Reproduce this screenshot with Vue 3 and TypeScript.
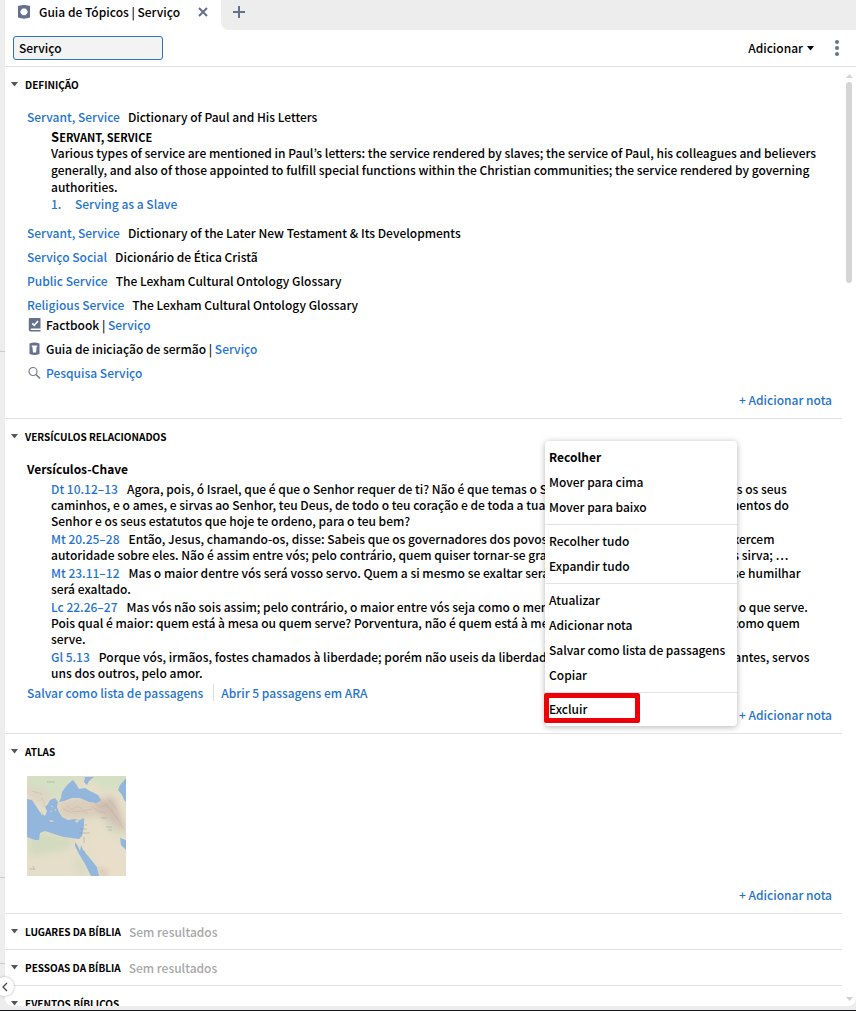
<script setup lang="ts">
import { ref } from 'vue'

interface Entry { term: string; source: string }
interface Verse { reference: string; text: string }
interface MenuItem { label: string; strong?: boolean; marked?: boolean }

const topic = ref('Serviço')

const entries: Entry[] = [
  { term: 'Servant, Service', source: 'Dictionary of the Later New Testament & Its Developments' },
  { term: 'Serviço Social', source: 'Dicionário de Ética Cristã' },
  { term: 'Public Service', source: 'The Lexham Cultural Ontology Glossary' },
  { term: 'Religious Service', source: 'The Lexham Cultural Ontology Glossary' },
]

const verses: Verse[] = [
  { reference: 'Dt 10.12–13', text: 'Agora, pois, ó Israel, que é que o Senhor requer de ti? Não é que temas o Senhor, teu Deus, e andes em todos os seus caminhos, e o ames, e sirvas ao Senhor, teu Deus, de todo o teu coração e de toda a tua alma, para guardares os mandamentos do Senhor e os seus estatutos que hoje te ordeno, para o teu bem?' },
  { reference: 'Mt 20.25–28', text: 'Então, Jesus, chamando-os, disse: Sabeis que os governadores dos povos os dominam e que os maiorais exercem autoridade sobre eles. Não é assim entre vós; pelo contrário, quem quiser tornar-se grande entre vós, será esse o que vos sirva; …' },
  { reference: 'Mt 23.11–12', text: 'Mas o maior dentre vós será vosso servo. Quem a si mesmo se exaltar será humilhado; e quem a si mesmo se humilhar será exaltado.' },
  { reference: 'Lc 22.26–27', text: 'Mas vós não sois assim; pelo contrário, o maior entre vós seja como o menor; e aquele que dirige seja como o que serve. Pois qual é maior: quem está à mesa ou quem serve? Porventura, não é quem está à mesa? Pois, no meio de vós, eu sou como quem serve.' },
  { reference: 'Gl 5.13', text: 'Porque vós, irmãos, fostes chamados à liberdade; porém não useis da liberdade para dar ocasião à carne; sede, antes, servos uns dos outros, pelo amor.' },
]

const menu: MenuItem[][] = [
  [{ label: 'Recolher', strong: true }, { label: 'Mover para cima' }, { label: 'Mover para baixo' }],
  [{ label: 'Recolher tudo' }, { label: 'Expandir tudo' }],
  [{ label: 'Atualizar' }, { label: 'Adicionar nota' }, { label: 'Salvar como lista de passagens' }, { label: 'Copiar' }],
  [{ label: 'Excluir', marked: true }],
]

const emptySections = ['Lugares da Bíblia', 'Pessoas da Bíblia']
</script>

<template>
  <div class="app">
    <aside class="rail">
      <button class="expand" aria-label="Expandir painel">
        <svg width="6" height="10" viewBox="0 0 6 10"><path d="M5 1 1 5l4 4" fill="none" stroke="#444" stroke-width="1.3" /></svg>
      </button>
    </aside>
    <div class="window">
      <nav class="tabs">
        <div class="tab">
          <svg width="14" height="16" viewBox="0 0 14 16"><path d="M1 2Q7-.2 13 2V13.500Q7 15.800 1 13.500Z" fill="#64708c" /><path d="M5.300 5h3.400l1.700 2.800-1.700 2.900H5.300L3.600 7.800Z" fill="#fff" stroke="#fff" stroke-linejoin="round" /></svg>
          <span class="tab-title">Guia de Tópicos | Serviço</span>
          <button class="icon-button" aria-label="Fechar guia">
            <svg width="10" height="10" viewBox="0 0 10 10"><path d="m1 1 8 8M9 1 1 9" stroke="#64708c" stroke-width="2" /></svg>
          </button>
        </div>
        <div class="tab-rest">
          <button class="icon-button" aria-label="Nova guia">
            <svg width="12" height="12" viewBox="0 0 12 12"><path d="M6 0v12M0 6h12" stroke="#64708c" stroke-width="2" /></svg>
          </button>
        </div>
      </nav>

      <header class="toolbar">
        <input v-model="topic" class="topic" type="text" aria-label="Tópico" />
        <div class="tools">
          <button class="add">Adicionar <svg width="7" height="5" viewBox="0 0 7 5"><path d="M0 0h7L3.500 4.500Z" fill="#000" /></svg></button>
          <button class="icon-button" aria-label="Mais opções">
            <svg width="4" height="16" viewBox="0 0 4 16" fill="#6b7385"><circle cx="2" cy="2" r="2" /><circle cx="2" cy="8" r="2" /><circle cx="2" cy="14" r="2" /></svg>
          </button>
        </div>
      </header>

      <div class="viewport">
        <main class="content">
          <section class="section">
            <h2 class="heading"><svg class="caret" viewBox="0 0 7 5"><path d="M0 0h7L3.500 4.500Z" /></svg><span class="title">Definição</span></h2>
            <div class="body definitions">
              <p class="entry"><a href="#">Servant, Service</a><span>Dictionary of Paul and His Letters</span></p>
              <div class="excerpt">
                <h3 class="caps">Servant, service</h3>
                <p>Various types of service are mentioned in Paul’s letters: the service rendered by slaves; the service of Paul, his colleagues and believers generally, and also of those appointed to fulfill special functions within the Christian communities; the service rendered by governing authorities.</p>
                <a class="numbered" href="#"><span>1.</span><span>Serving as a Slave</span></a>
              </div>
              <p v-for="entry in entries" :key="entry.term" class="entry"><a href="#">{{ entry.term }}</a><span>{{ entry.source }}</span></p>
            </div>
            <div class="resources">
              <p class="resource">
                <svg width="13" height="14" viewBox="0 0 13 14"><path d="M2 0h10.500v10.500H3a1 1 0 0 0 0 1.500h9.500v1.500H2.500A2 2 0 0 1 .800 11.800V1.200Q.800 0 2 0Z" fill="#64708c" /><path d="m4.300 5.400 1.900 1.900 3.800-4.100" fill="none" stroke="#fff" stroke-width="1.700" /></svg>
                <span>Factbook | <a href="#">Serviço</a></span>
              </p>
              <p class="resource">
                <svg width="13" height="14" viewBox="0 0 13 14"><path d="M1.500 1.500Q6.500-.5 11.500 1.500V12Q6.500 14 1.500 12Z" fill="#64708c" /><path d="M3.700 3.500h5.600v1.300h-.700l-.500 5.700H4.900l-.500-5.700h-.700Z" fill="#fff" /></svg>
                <span>Guia de iniciação de sermão | <a href="#">Serviço</a></span>
              </p>
              <p class="resource">
                <svg width="13" height="14" viewBox="0 0 13 14" fill="none" stroke="#777d87"><circle cx="5" cy="5.500" r="4" stroke-width="1.200" /><path d="m8 8.500 4 4" stroke-width="1.700" /></svg>
                <a href="#">Pesquisa Serviço</a>
              </p>
            </div>
            <div class="note note-spaced"><a href="#">+ Adicionar nota</a></div>
          </section>

          <section class="section">
            <h2 class="heading"><svg class="caret" viewBox="0 0 7 5"><path d="M0 0h7L3.500 4.500Z" /></svg><span class="title">Versículos relacionados</span></h2>
            <div class="body related">
              <h3 class="key">Versículos-Chave</h3>
              <p v-for="verse in verses" :key="verse.reference" class="verse"><a href="#">{{ verse.reference }}</a>{{ verse.text }}</p>
              <div class="links"><a href="#">Salvar como lista de passagens</a><a href="#">Abrir 5 passagens em ARA</a></div>
            </div>
            <div class="note"><a href="#">+ Adicionar nota</a></div>

            <div class="menu" role="menu">
              <div v-for="(group, index) in menu" :key="index" class="group">
                <button v-for="item in group" :key="item.label" class="item" :class="{ strong: item.strong, marked: item.marked }" role="menuitem">{{ item.label }}</button>
              </div>
            </div>
          </section>

          <section class="section">
            <h2 class="heading"><svg class="caret" viewBox="0 0 7 5"><path d="M0 0h7L3.500 4.500Z" /></svg><span class="title">Atlas</span></h2>
            <div class="body atlas">
              <svg class="map" viewBox="0 0 99 100" role="img" aria-label="Mapa do Mediterrâneo oriental">
                <defs>
                  <filter id="soft" x="-10%" y="-10%" width="120%" height="120%"><feGaussianBlur stdDeviation="3" /></filter>
                  <filter id="shore"><feGaussianBlur stdDeviation=".5" /></filter>
                </defs>
                <rect width="99" height="100" fill="#e5dec9" />
                <g filter="url(#soft)">
                  <path d="M-5-5h110v18L75 14 62 0 42 7 34 22 20 22 0 18Z" fill="#d5dfc4" />
                  <path d="M-4 8l22 5 8 10-10 8-20-14Z" fill="#ddd5c1" />
                  <path d="M0 62l14-6 34 5-6 12-38 8Z" fill="#d3dabf" />
                  <path d="M32 26l20-4 24 3 12-2 6 20 5 14-11-5-14-12-24 3-18-2Z" fill="#dacdbb" />
                  <path d="M66 26l20-6 7 18 8 20-15-12-14-9Z" fill="#d0c0b3" />
                  <path d="M72 38l16 11 6 12-12-8Z" fill="#d3d8bd" />
                  <path d="M47 78l8 6 8 16H50Z" fill="#dadcc3" />
                  <path d="M60 58l25 5 12 14v23H76Z" fill="#e9dec9" />
                </g>
                <path d="M72 91q8 3 10 9H73Z" fill="#d8bfaa" filter="url(#soft)" />
                <g fill="#92b6dc" filter="url(#shore)">
                  <path d="M34 22 35 16l5-7 6-5 3 4 3 5 6-1 5 3 8 4 3 5-4 3-8-1-9-4-8 0-8 3-5 1Z" />
                  <path d="M58 1h9l-5 4-2 4-3-3Z" />
                  <path d="M99 2l-6 7-2 5 4 5 2 5 2 2Z" />
                  <path d="M0 23l5 1 4 6 4 6 5 4 2-5-2-4 3-3 2-4 5-2 3 4-1 5 2 5 3 5 6 3 6-1 6 1 4-2 0 8-2 10-3 3-7-1-8-1-7-2-6-2-6-2-5 2-1 7-4 0-8-3Z" />
                  <path d="M48 66l3 4 2 5 1-6 2 5 5 6 9 11 2 9h-8l-6-12-6-10-4-8Z" />
                  <path d="M93 62l6 2v10l-5-5Z" />
                </g>
                <path d="M22 44l6 1-4 1ZM48 45l5-2-3 4ZM14 33l4 4-4 2Z" fill="#e0d8c4" />
                <path d="m24 30 2 1m-3 4 2 1m3-3 1 2" stroke="#d8d0bb" />
                <g fill="none" stroke="#99988d" stroke-width=".7" opacity=".65">
                  <path d="M20 6h8M53 53h7M52 57h11M58 49h2M74 42h6M79 51h6M81 54h4M2 93h5M6 90l2 4M57 61v6M57 74v3" />
                </g>
                <g fill="none" stroke="#b6a495" stroke-width=".6" opacity=".5">
                  <path d="m40 30 5 4 6-4 6 5 8-2M67 27l7 4 5-3 8 9M36 33l8 3 10-1 7 3M72 24l10 8 9 12M82 24l8 10M88 38l8 14M64 30l7 5 7 2" />
                  <path d="m14 22 4 5-2 4M5 15l10 3" />
                </g>
              </svg>
            </div>
            <div class="note"><a href="#">+ Adicionar nota</a></div>
          </section>

          <section v-for="name in emptySections" :key="name" class="section">
            <h2 class="heading"><svg class="caret" viewBox="0 0 7 5"><path d="M0 0h7L3.500 4.500Z" /></svg><span class="title">{{ name }}</span><span class="empty">Sem resultados</span></h2>
          </section>
          <section class="section">
            <h2 class="heading"><svg class="caret" viewBox="0 0 7 5"><path d="M0 0h7L3.500 4.500Z" /></svg><span class="title">Eventos bíblicos</span></h2>
          </section>
        </main>

        <div class="scroll" aria-hidden="true">
          <svg width="7" height="4" viewBox="0 0 7 4"><path d="M0 4h7L3.500 0Z" fill="#d5d5d5" /></svg>
          <div class="track"><div class="thumb"></div></div>
          <svg width="7" height="4" viewBox="0 0 7 4"><path d="M0 0h7L3.500 4Z" fill="#d0d0d0" /></svg>
        </div>
      </div>
    </div>
  </div>
</template>

<style>
body { margin: 0; background: #ededed; }
</style>

<style scoped>
.app { display: flex; height: 100vh; box-sizing: border-box; padding-bottom: 4px; border-bottom: 1px solid #15151a; background: #ededed; color: #000; font: 500 12px/16px "Noto Sans CJK KR", "Noto Sans", sans-serif; }
h2, h3, p { margin: 0; font-size: inherit; font-weight: inherit; }
a { color: #1f74d1; text-decoration: none; }
button { border: 0; padding: 0; background: none; color: inherit; font: inherit; }
svg { display: block; flex: none; }
.rail { position: relative; flex: none; width: 5px; background: linear-gradient(#ccc, #ccc) 0 351px / 5px 1px no-repeat, linear-gradient(#ccc, #ccc) 0 877px / 5px 1px no-repeat, linear-gradient(#ccc, #ccc) 0 963px / 5px 1px no-repeat; }
.expand { position: absolute; z-index: 2; bottom: 10px; left: -5px; display: flex; align-items: center; justify-content: center; width: 19px; height: 19px; border-radius: 50%; background: #fff; box-shadow: 0 0 3px rgba(0, 0, 0, .3); }
.window { flex: 1; min-width: 0; display: flex; flex-direction: column; background: #fff; border-radius: 0 0 8px 8px; overflow: hidden; }
.tabs { flex: none; display: flex; height: 30px; }
.tab { display: flex; align-items: center; padding: 0 13px 6px 12px; }
.tab-title { margin: 0 18px 0 8px; white-space: nowrap; }
.icon-button { display: flex; }
.tab-rest { flex: 1; display: flex; align-items: center; padding: 0 12px 6px; background: #ededed; border-bottom-left-radius: 8px; }
.toolbar { flex: none; display: flex; align-items: center; justify-content: space-between; height: 36px; padding: 0 17px 0 8px; border-bottom: 1px solid #e3e3e3; }
.topic { box-sizing: border-box; width: 150px; height: 24px; padding: 0 5px 2px; border: 1px solid #2a72bd; border-radius: 3px; background: #f3f3f3; color: #000; font: inherit; outline: 0; }
.tools { display: flex; align-items: center; gap: 21px; }
.add { display: flex; align-items: center; gap: 4px; }
.viewport { flex: 1; min-height: 0; display: flex; overflow: hidden; }
.content { flex: 1; min-width: 0; }
.section { position: relative; border-bottom: 1px solid #e3e3e3; }
.heading { display: flex; align-items: center; height: 35px; padding-left: 6px; }
.caret { width: 7px; height: 5px; fill: #555; margin-right: 7px; }
.title { font-size: 10px; font-weight: 700; text-transform: uppercase; }
.empty { margin-left: 8px; color: #a8a8a8; }
.body { padding: 0 10px 0 22px; }
.definitions { padding-top: 7px; }
.entry { display: flex; gap: 8px; }
.entry + .entry { margin-top: 8px; }
.excerpt { margin: 4px 8px 13px 24px; line-height: 17px; }
.caps { height: 15px; font-size: 11px; font-weight: 700; line-height: 15px; text-transform: uppercase; }
.caps::first-letter { font-size: 13px; }
.numbered { display: flex; }
.numbered span:first-child { width: 24px; }
.resources { padding-left: 23px; }
.resource { display: flex; align-items: center; gap: 5px; height: 24px; }
.note { display: flex; align-items: center; justify-content: flex-end; height: 24px; padding: 0 10px 6px; }
.note-spaced { padding-top: 3px; }
.related { padding-top: 3px; }
.key { font-weight: 700; line-height: 23px; }
.verse { margin: 0 16px 0 24px; padding: 1px 0; }
.verse a { margin-right: 9px; }
.links { display: flex; padding: 2px 0; height: 17px; line-height: 17px; }
.links a + a { margin-left: 10px; padding-left: 7px; border-left: 1px solid #ddd; }
.menu { position: absolute; z-index: 3; top: 22px; right: 105px; width: 192px; box-sizing: border-box; padding: 4px 0; border-radius: 4px; background: #fff; box-shadow: 0 1px 6px rgba(0, 0, 0, .3); }
.group + .group { margin-top: 4px; padding-top: 4px; border-top: 1px solid #e3e3e3; }
.item { position: relative; display: block; width: 100%; height: 25px; padding: 0 4px 2px; text-align: left; white-space: nowrap; }
.strong { font-weight: 700; }
.marked::after { content: ""; position: absolute; inset: -4px auto -1px -1px; width: 96px; box-sizing: border-box; border: 5px solid #ee0008; border-radius: 2px; }
.atlas { padding-top: 7px; padding-bottom: 7px; }
.map { width: 99px; height: 100px; }
.scroll { flex: none; width: 14px; display: flex; flex-direction: column; align-items: center; padding: 7px 0 5px; box-sizing: border-box; }
.track { flex: 1; width: 6px; padding-top: 4px; }
.thumb { height: 22%; border-radius: 3px; background: #d5d5d5; }
</style>
